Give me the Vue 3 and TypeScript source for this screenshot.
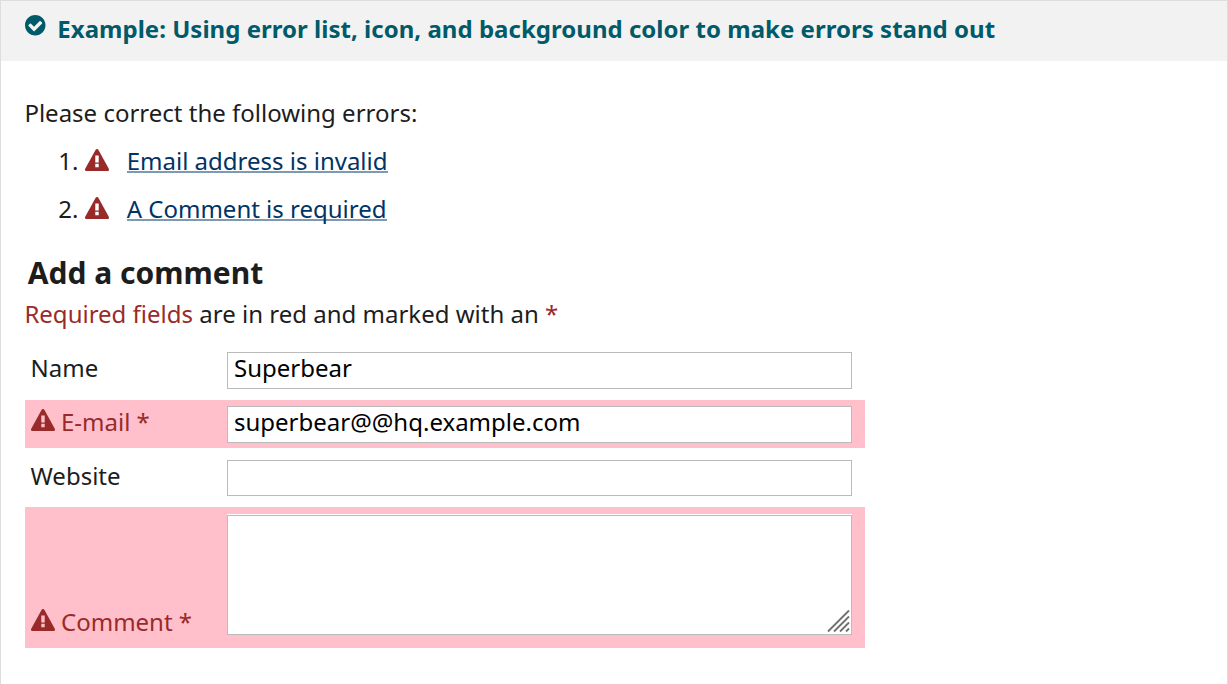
<script setup lang="ts">
import { ref } from 'vue'

interface Field {
  id: string
  label: string
  value: string
  invalid: boolean
  multiline?: boolean
}

const warningPath =
  'M16 21.3v-4.1h-4v4.1zM16 15.7v-8.2h-4v8.2zM15.75 1.047l12 22c0.344 0.609 0.328 1.359-0.031 1.969s-1.016 0.984-1.719 0.984h-24c-0.703 0-1.359-0.375-1.719-0.984s-0.375-1.359-0.031-1.969l12-22c0.344-0.641 1.016-1.047 1.75-1.047s1.406 0.406 1.75 1.047z'
const checkPath =
  'M20.062 11.469c0-0.266-0.094-0.531-0.281-0.719l-1.422-1.406c-0.187-0.187-0.438-0.297-0.703-0.297s-0.516 0.109-0.703 0.297l-6.375 6.359-3.531-3.531c-0.187-0.187-0.438-0.297-0.703-0.297s-0.516 0.109-0.703 0.297l-1.422 1.406c-0.187 0.187-0.281 0.453-0.281 0.719s0.094 0.516 0.281 0.703l5.656 5.656c0.187 0.187 0.453 0.297 0.703 0.297 0.266 0 0.531-0.109 0.719-0.297l8.5-8.484c0.187-0.187 0.281-0.438 0.281-0.703zM24 14c0 6.625-5.375 12-12 12s-12-5.375-12-12 5.375-12 12-12 12 5.375 12 12z'

const errors = [
  { target: 'email', text: 'Email address is invalid' },
  { target: 'comment', text: 'A Comment is required' },
]

const fields = ref<Field[]>([
  { id: 'name', label: 'Name', value: 'Superbear', invalid: false },
  { id: 'email', label: 'E-mail *', value: 'superbear@@hq.example.com', invalid: true },
  { id: 'website', label: 'Website', value: '', invalid: false },
  { id: 'comment', label: 'Comment *', value: '', invalid: true, multiline: true },
])
</script>

<template>
  <section class="example">
    <header class="example-header">
      <svg class="check" viewBox="0 2 24 24"><path :d="checkPath" /></svg>
      <span class="title">Example: Using error list, icon, and background color to make errors stand out</span>
    </header>
    <div class="body">
      <p class="intro">Please correct the following errors:</p>
      <ol class="errors">
        <li v-for="(error, i) in errors" :key="error.target">
          <span class="num">{{ i + 1 }}.</span>
          <svg class="warn" viewBox="0 0 28 26"><path fill-rule="evenodd" :d="warningPath" /></svg>
          <a :href="'#' + error.target">{{ error.text }}</a>
        </li>
      </ol>
      <h2>Add a comment</h2>
      <p class="note"><span class="red">Required fields</span> are in red and marked with an <span class="red">*</span></p>
      <form class="form" @submit.prevent>
        <div v-for="field in fields" :key="field.id" class="row" :class="[field.id, { invalid: field.invalid }]">
          <label :for="field.id">
            <svg v-if="field.invalid" class="warn" viewBox="0 0 28 26"><path fill-rule="evenodd" :d="warningPath" /></svg>
            <span>{{ field.label }}</span>
          </label>
          <div v-if="field.multiline" class="area">
            <textarea :id="field.id" v-model="field.value"></textarea>
            <svg class="grip" viewBox="0 0 24 24">
              <path d="M1 22.5L22 1.5M7 22.5L22 7.5M13 22.5L22 13.5M19 22.5L22 19.5" />
            </svg>
          </div>
          <input v-else :id="field.id" v-model="field.value" type="text" />
        </div>
      </form>
    </div>
  </section>
</template>

<style>
body {
  background: #fff;
  overflow: hidden;
}
</style>

<style scoped>
.example {
  box-sizing: border-box;
  height: 684px;
  border: 1px solid #ddd;
  border-bottom: 0;
  font-family: "Noto Sans", sans-serif;
  font-size: 24px;
  line-height: 36px;
  color: #1d1d1d;
}
.example-header {
  display: flex;
  align-items: flex-start;
  height: 60px;
  box-sizing: border-box;
  padding: 10px 24px 0;
  background: #f2f2f2;
  color: #005a6a;
  font-weight: 700;
}
.check {
  width: 20.5px;
  height: 20.5px;
  margin: 4px 11.8px 0 0;
  fill: currentColor;
}
.title {
  white-space: nowrap;
  letter-spacing: 0.02px;
}
.body {
  padding: 34px 24px 0;
}
p, h2, ol {
  margin: 0;
  padding: 0;
}
.intro, .note {
  text-indent: -0.6px;
}
.errors {
  list-style: none;
  margin-top: 12px;
}
.errors li {
  display: flex;
  height: 36px;
  margin-bottom: 12px;
}
.num {
  width: 53.5px;
  margin-right: 6.5px;
  text-align: right;
}
.warn {
  flex: none;
  width: 24px;
  height: 22.3px;
  fill: #992a2a;
}
.errors .warn {
  margin: 6px 18px 0 0;
}
a {
  color: #036;
  text-decoration: none;
  text-indent: -0.3px;
  margin-right: auto;
  height: 30px;
  width: max-content;
  border-bottom: 2px solid #7f99b2;
  box-sizing: border-box;
}
h2 {
  margin: 28px 0 0 2.8px;
  font-size: 30px;
  line-height: 36px;
}
.note {
  margin-top: 5px;
}
.red, .invalid label {
  color: #992a2a;
}
.form {
  display: flex;
  flex-direction: column;
  gap: 6px;
  width: 840px;
  margin-top: 14px;
}
.row {
  display: grid;
  grid-template-columns: 196px 625px;
  box-sizing: border-box;
  height: 48px;
  padding: 6px 6px 5px;
}
.row.website {
  height: 47px;
}
.row.comment {
  height: 141px;
  padding-top: 8px;
}
.invalid {
  background: #ffc0cb;
}
label {
  display: flex;
  height: 36px;
  margin-top: -2px;
  text-indent: -0.5px;
}
.invalid label {
  text-indent: 0;
}
label .warn {
  margin: 5px 6px 0 0;
}
.comment label {
  align-self: end;
  margin-bottom: 3px;
}
input, textarea {
  display: block;
  box-sizing: border-box;
  width: 625px;
  height: 37px;
  margin: 0;
  padding: 0 6px;
  border: 1px solid #bbb;
  border-radius: 0;
  background: #fff;
  color: #000;
  font: 24px/33px "Noto Sans", sans-serif;
  outline: none;
}
input {
  padding: 0 6px 4px;
  line-height: 31px;
}
.name input, .email input {
  padding-bottom: 6px;
  line-height: normal;
}
.website input {
  height: 36px;
}
.area {
  position: relative;
  height: 120px;
  box-shadow: 0 -1px #fff;
}
textarea {
  height: 120px;
  resize: none;
}
.grip {
  position: absolute;
  right: 1px;
  bottom: 2px;
  width: 24px;
  height: 24px;
  fill: none;
  stroke: #707070;
  stroke-width: 1.8;
}
</style>
